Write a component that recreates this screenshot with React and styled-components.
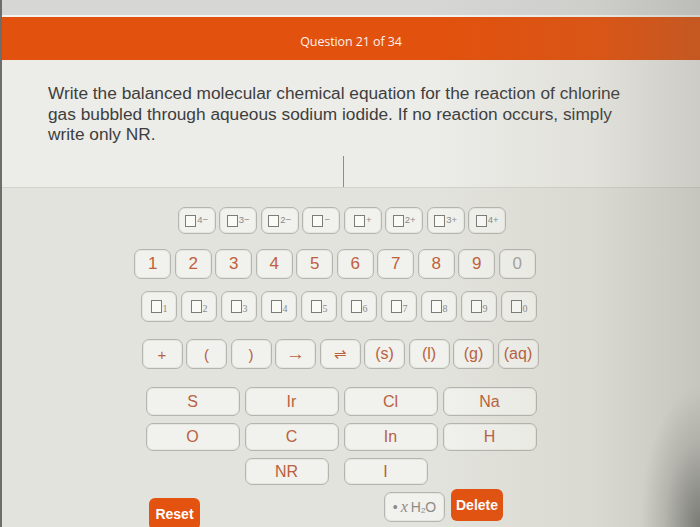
import React from 'react';
import styled, { createGlobalStyle } from 'styled-components';

const Global = createGlobalStyle`
  html, body { margin: 0; padding: 0; }
  body {
    width: 700px; height: 527px; overflow: hidden;
    background: #ecece8;
    font-family: "Liberation Sans", Arial, sans-serif;
  }
`;

const Page = styled.div`
  position: relative;
  width: 700px;
  height: 527px;
  overflow: hidden;
  box-sizing: border-box;
  border-left: 2px solid #6d6d6b;
  background: #ecece8;
  display: flex;
  flex-direction: column;
  align-items: stretch;
`;

const TopStrip = styled.div`
  height: 15px;
  flex: none;
  background: #d6d7d5;
  border-bottom: 2px solid #f4f3f0;
`;

const Header = styled.header`
  height: 43px;
  flex: none;
  box-sizing: border-box;
  padding-top: 6px;
  background: #e2510d;
  display: flex;
  align-items: center;
  justify-content: center;
  color: #fdf1ea;
  font-family: "Open Sans", sans-serif;
  font-size: 12.5px;
  letter-spacing: -0.1px;
`;

const AnswerArea = styled.section`
  flex: none;
  height: 128px;
  box-sizing: border-box;
  padding: 23px 0 0 46px;
  border-bottom: 1px solid #d3d3cd;
  display: flex;
  flex-direction: column;
`;

const Prompt = styled.p`
  margin: 0;
  width: 590px;
  font-size: 17.3px;
  line-height: 20.5px;
  color: #3e3e3e;
`;

const Cursor = styled.div`
  width: 1px;
  height: 32px;
  margin: 11px 0 0 295px;
  background: #7f8f9f;
`;

const Keypad = styled.section`
  flex: 1;
  width: 100%;
  box-sizing: border-box;
  background: #e3e3dd;
  padding: 19px 0 0 131px;
`;

const KeyArea = styled.div`
  width: 410px;
  display: flex;
  flex-direction: column;
`;

const KeyRow = styled.div`
  display: flex;
  justify-content: center;
  gap: ${p => p.$gap}px;
  margin-top: ${p => p.$mt}px;
  transform: translateX(${p => p.$dx || 0}px);
`;

const Key = styled.button`
  box-sizing: border-box;
  width: ${p => p.$w}px;
  height: ${p => p.$h}px;
  margin-top: ${p => p.$mt || 0}px;
  padding: 0;
  border: 1px solid #b5b5af;
  border-radius: 7px;
  background: #f1f1ed;
  box-shadow: inset 0 0 0 1px #e6e6e1;
  display: flex;
  align-items: center;
  justify-content: center;
  font-family: "Liberation Sans", Arial, sans-serif;
  font-size: ${p => p.$fs || 16}px;
  color: ${p => p.$color || '#b8623f'};
`;

const Box = styled.span`
  display: inline-block;
  box-sizing: border-box;
  width: ${p => p.$w || 11}px;
  height: ${p => p.$h || 12}px;
  border: 1.4px solid #7b7b78;
  background: #fafaf7;
`;

const Sup = styled.span`
  align-self: flex-start;
  margin-top: 6px;
  margin-left: 1px;
  font-size: 9.5px;
  color: #8c8c88;
`;

const Sub = styled.span`
  align-self: flex-end;
  margin-bottom: 7px;
  margin-left: 1px;
  font-family: "Liberation Serif", serif;
  font-size: 10px;
  color: #8a8a86;
`;

const ElementGrid = styled.div`
  display: grid;
  grid-template-columns: repeat(4, 94px);
  column-gap: 5px;
  row-gap: 7px;
  justify-content: center;
  margin-top: 18px;
  transform: translateX(3px);
`;

const ElementKey = styled(Key)`
  grid-column: ${p => p.$col || 'auto'};
`;

const BottomRow = styled.div`
  display: flex;
  align-items: flex-start;
  margin-top: 4px;
  padding-left: 16px;
`;

const ActionButton = styled.button`
  box-sizing: border-box;
  width: ${p => p.$w}px;
  height: 32px;
  margin-top: ${p => p.$mt || 0}px;
  margin-left: ${p => p.$ml || 0}px;
  border: none;
  border-radius: 6px;
  background: #e3520f;
  color: #fff;
  font-family: "Liberation Sans", Arial, sans-serif;
  font-weight: bold;
  font-size: 14px;
  padding: 0;
`;

const HydrateKey = styled(Key)`
  margin-left: ${p => p.$ml}px;
  color: #8c8c88;
  font-size: 14px;
  gap: 3px;
`;

const Italic = styled.i`
  font-family: "Liberation Serif", serif;
  font-size: 16px;
`;

const Small = styled.sub`
  font-size: 8px;
  vertical-align: -1px;
`;

const Vignette = styled.div`
  position: absolute;
  inset: 0;
  pointer-events: none;
  background:
    radial-gradient(ellipse 60px 140px at 100% 100%, rgba(90,90,86,0.7) 0%, rgba(90,90,86,0.2) 60%, rgba(90,90,86,0) 100%),
    linear-gradient(to right, rgba(130,125,105,0) 62%, rgba(130,125,105,0.1) 85%, rgba(110,108,98,0.25) 100%);
`;

const charges = ['4−', '3−', '2−', '−', '+', '2+', '3+', '4+'];
const digits = ['1', '2', '3', '4', '5', '6', '7', '8', '9', '0'];
const subs = ['1', '2', '3', '4', '5', '6', '7', '8', '9', '0'];
const symbols = ['+', '(', ')', '→', '⇌', '(s)', '(l)', '(g)', '(aq)'];

export default function App() {
  return (
    <>
      <Global />
      <Page>
        <TopStrip />
        <Header>Question 21 of 34</Header>
        <AnswerArea>
          <Prompt>
            Write the balanced molecular chemical equation for the reaction of chlorine gas bubbled through aqueous sodium iodide. If no reaction occurs, simply write only NR.
          </Prompt>
          <Cursor />
        </AnswerArea>
        <Keypad>
          <KeyArea>
            <KeyRow $gap={3.5} $mt={0} $dx={4}>
              {charges.map(c => (
                <Key key={c} $w={38} $h={27}>
                  <Box />
                  <Sup>{c}</Sup>
                </Key>
              ))}
            </KeyRow>
            <KeyRow $gap={3.5} $mt={15} $dx={-3}>
              {digits.map(d => (
                <Key key={d} $w={37} $h={30} $fs={17} $color={d === '0' ? '#a3a3a0' : '#bf5f3c'}>{d}</Key>
              ))}
            </KeyRow>
            <KeyRow $gap={4} $mt={12} $dx={1}>
              {subs.map(s => (
                <Key key={s} $w={36} $h={31}>
                  <Box $h={13} />
                  <Sub>{s}</Sub>
                </Key>
              ))}
            </KeyRow>
            <KeyRow $gap={3.5} $mt={17} $dx={2}>
              {symbols.map(s => (
                <Key key={s} $w={41} $h={30} $fs={s === '→' ? 19 : s.length > 1 ? 16 : 15} $color="#b9603e">{s}</Key>
              ))}
            </KeyRow>
            <ElementGrid>
              <ElementKey $w={94} $h={29}>S</ElementKey>
              <ElementKey $w={94} $h={29}>Ir</ElementKey>
              <ElementKey $w={94} $h={29}>Cl</ElementKey>
              <ElementKey $w={94} $h={29}>Na</ElementKey>
              <ElementKey $w={94} $h={28}>O</ElementKey>
              <ElementKey $w={94} $h={28}>C</ElementKey>
              <ElementKey $w={94} $h={28}>In</ElementKey>
              <ElementKey $w={94} $h={28}>H</ElementKey>
              <ElementKey $w={84} $h={27} $col={2}>NR</ElementKey>
              <ElementKey $w={84} $h={27}>I</ElementKey>
            </ElementGrid>
            <BottomRow>
              <ActionButton $w={51} $mt={9}>Reset</ActionButton>
              <HydrateKey as="button" $w={61} $h={30} $mt={3} $ml={184}>
                <span>•</span>
                <Italic>x</Italic>
                <span>H<Small>2</Small>O</span>
              </HydrateKey>
              <ActionButton $w={52} $ml={6}>Delete</ActionButton>
            </BottomRow>
          </KeyArea>
        </Keypad>
        <Vignette />
      </Page>
    </>
  );
}
